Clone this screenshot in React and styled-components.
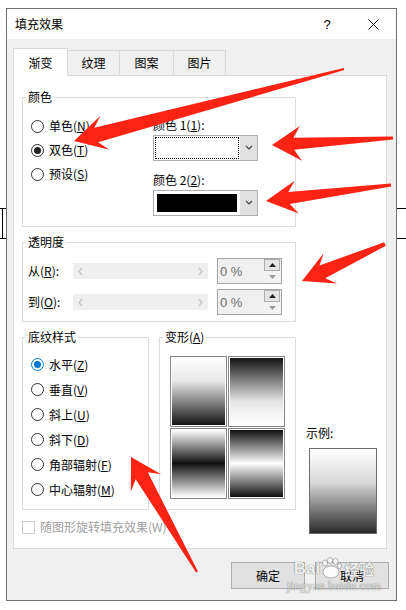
import React from 'react'
import styled, { createGlobalStyle } from 'styled-components'

const GlobalStyle = createGlobalStyle`
  html, body { margin: 0; padding: 0; background: #fff; }
  body {
    font-family: "Noto Sans CJK SC", "Microsoft YaHei", sans-serif;
    font-size: 12px;
    color: #000;
  }
  * { box-sizing: border-box; }
`

const Page = styled.div`
  position: relative;
  width: 406px;
  height: 610px;
  display: flex;
  overflow: hidden;
  background: #fff;
`

// bits of the document table peeking out on both sides
const Gutter = styled.div`
  flex: none;
  width: ${p => p.$w}px;
  padding-top: 208px;
`

const TableEdge = styled.div`
  height: 31px;
  border-top: 1px solid #000;
  border-bottom: 1px solid #000;
  display: flex;
  padding-left: 2px;
`

const TableStem = styled.div`
  width: 1px;
  background: #000;
`

const Dialog = styled.div`
  flex: none;
  width: 391px;
  height: 593px;
  margin-top: 8px;
  border: 1px solid #6f6f6f;
  background: #f0f0f0;
  display: flex;
  flex-direction: column;
`

const TitleBar = styled.div`
  height: 30px;
  background: #fff;
  display: flex;
  align-items: center;
  padding-left: 8px;
`

const TitleText = styled.div`
  flex: 1;
  line-height: 16px;
`

const CaptionButton = styled.div`
  width: 46px;
  height: 30px;
  display: flex;
  align-items: center;
  justify-content: center;
  font-family: "Liberation Sans", Arial, sans-serif;
  font-size: 13px;
`

const Body = styled.div`
  flex: 1;
  display: flex;
  flex-direction: column;
  padding: 9px 9px 11px 6px;
`

const TabRow = styled.div`
  display: flex;
  align-items: flex-end;
  height: 27px;
`

const Tab = styled.div`
  width: ${p => p.$w}px;
  height: ${p => (p.$active ? 28 : 25)}px;
  margin-bottom: ${p => (p.$active ? -1 : 0)}px;
  margin-left: ${p => (p.$first ? 0 : -1)}px;
  background: ${p => (p.$active ? '#fff' : '#f0f0f0')};
  border: 1px solid #d9d9d9;
  border-bottom: none;
  display: flex;
  align-items: center;
  justify-content: center;
  line-height: 14px;
  position: relative;
  z-index: ${p => (p.$active ? 2 : 1)};
`

const Panel = styled.div`
  height: 474px;
  background: #fff;
  border: 1px solid #d9d9d9;
  padding: 14px 0 14px 8px;
  display: flex;
  flex-direction: column;
`

const Group = styled.fieldset`
  margin: ${p => p.$mt || 0}px 0 0 0;
  padding: 0;
  min-width: 0;
  width: ${p => p.$w}px;
  border: 1px solid #dcdcdc;
`

const Legend = styled.legend`
  padding: 0 2px;
  margin-left: 3px;
  line-height: 14px;
  font-size: 12px;
`

const ColorGrid = styled.div`
  display: grid;
  grid-template-columns: 130px 1fr;
`

const RadioCol = styled.div`
  display: flex;
  flex-direction: column;
  padding: ${p => p.$pt}px 0 ${p => p.$pb || 0}px 8px;
`

const RadioRow = styled.div`
  display: flex;
  align-items: center;
  gap: 5px;
  height: ${p => p.$h}px;
  line-height: 14px;
  white-space: nowrap;
`

const RadioDot = styled.span`
  flex: none;
  width: 13px;
  height: 13px;
  border-radius: 50%;
  border: 1px solid ${p => (p.$blue ? '#0078d7' : '#333')};
  background: #fff;
  display: flex;
  align-items: center;
  justify-content: center;
  &::after {
    content: '';
    display: ${p => (p.$checked ? 'block' : 'none')};
    width: 7px;
    height: 7px;
    border-radius: 50%;
    background: ${p => (p.$blue ? '#0078d7' : '#222')};
  }
`

const Mn = styled.span`
  text-decoration: underline;
  text-underline-offset: 1px;
`

const ComboCol = styled.div`
  display: flex;
  flex-direction: column;
  padding: 11px 0 10px 0;
`

const FieldLabel = styled.div`
  line-height: 20px;
  height: 20px;
  margin-top: ${p => p.$mt || 0}px;
`

const Combo = styled.div`
  width: 105px;
  height: 26px;
  border: 1px solid #adadad;
  padding: 1px;
  display: flex;
  background: #fff;
`

const ComboField = styled.div`
  flex: 1;
  padding: 1px;
  border: 1px dotted ${p => (p.$focus ? '#000' : 'transparent')};
  display: flex;
`

const Swatch = styled.div`
  flex: 1;
  background: ${p => p.$color};
`

const ComboButton = styled.div`
  width: 17px;
  margin: -1px -1px -1px 1px;
  background: #e1e1e1;
  display: flex;
  align-items: center;
  justify-content: center;
`

const TransRows = styled.div`
  display: flex;
  flex-direction: column;
  gap: 5px;
  padding: 9px 0 6px 5px;
`

const TransRow = styled.div`
  display: flex;
  align-items: center;
  height: 26px;
`

const TransLabel = styled.div`
  width: 45px;
  line-height: 14px;
`

const Slider = styled.div`
  width: 135px;
  height: 16px;
  background: #efefef;
  display: flex;
  align-items: center;
  justify-content: space-between;
  padding: 0 5px;
`

const Spin = styled.div`
  width: 65px;
  height: 26px;
  margin-left: 9px;
  border: 1px solid #a5a5a5;
  background: #f0f0f0;
  display: flex;
  align-items: center;
  padding-left: 2px;
  font-family: "Liberation Sans", Arial, sans-serif;
  font-size: 13px;
  color: #6d6d6d;
`

const SpinText = styled.div`
  flex: 1;
`

const SpinButtons = styled.div`
  width: 16px;
  height: 24px;
  margin-right: 1px;
  display: flex;
  flex-direction: column;
`

const SpinButton = styled.div`
  flex: 1;
  display: flex;
  align-items: center;
  justify-content: center;
  background: ${p => (p.$on ? '#e5e5e5' : '#f3f3f3')};
  border: 1px solid ${p => (p.$on ? '#adadad' : 'transparent')};
`

const Lower = styled.div`
  display: flex;
  margin-top: 8px;
`

const LeftPart = styled.div`
  display: flex;
  flex-direction: column;
`

const GroupsRow = styled.div`
  display: flex;
  gap: 10px;
`

const VariantGrid = styled.div`
  display: grid;
  grid-template-columns: 57px 57px;
  grid-auto-rows: 71px;
  gap: 1px;
  padding: 12px 0 0 10px;
`

const Variant = styled.div`
  border: 1px solid #858585;
  padding: 1px;
  background: #fff;
  display: flex;
`

const Shade = styled.div`
  flex: 1;
  background: ${p => p.$bg};
`

const CheckRow = styled.div`
  display: flex;
  align-items: center;
  gap: 5px;
  height: 14px;
  margin-top: 10px;
  color: #a0a0a0;
  line-height: 14px;
`

const CheckBox = styled.span`
  width: 13px;
  height: 13px;
  border: 1px solid #cccccc;
  background: #fff;
`

const SampleCol = styled.div`
  display: flex;
  flex-direction: column;
  justify-content: flex-end;
  margin-left: 13px;
`

const SampleLabel = styled.div`
  line-height: 14px;
  margin: 0 0 8px -3px;
`

const SampleBox = styled.div`
  width: 68px;
  height: 86px;
  border: 1px solid #6d6d6d;
  background: linear-gradient(to bottom, #ffffff 0%, #d8d8d8 40%, #2a2a2a 100%);
`

const ButtonRow = styled.div`
  display: flex;
  justify-content: flex-end;
  gap: 10px;
  margin: 13px -2px 0 0;
`

const Button = styled.button`
  width: 74px;
  height: 27px;
  border: 1px solid #adadad;
  background: #e1e1e1;
  font: inherit;
  font-size: 12px;
  padding: 0;
  color: #000;
`

const Overlay = styled.svg`
  position: absolute;
  left: 0;
  top: 0;
  pointer-events: none;
`

const Watermark = styled.div`
  position: absolute;
  left: 288px;
  top: 555px;
  width: 92px;
  pointer-events: none;
  color: rgba(255, 255, 255, 0.92);
  text-shadow: 0 0 1px rgba(0, 0, 0, 0.45), 0 0 1px rgba(0, 0, 0, 0.3);
  display: flex;
  flex-direction: column;
  align-items: center;
`

const WmTop = styled.div`
  display: flex;
  align-items: flex-end;
  font-family: "Liberation Sans", Arial, sans-serif;
  font-weight: bold;
  font-size: 17px;
  line-height: 20px;
  height: 24px;
`

const WmCn = styled.span`
  font-family: "Noto Sans CJK SC", sans-serif;
  font-size: 15px;
  margin-left: 2px;
`

const WmUrl = styled.div`
  font-family: "Liberation Serif", serif;
  font-size: 12px;
  line-height: 14px;
  letter-spacing: 0.3px;
  color: rgba(255, 255, 255, 0.8);
`

const Chevron = ({ dir }) => {
  const pts = {
    down: '1,1 4,4 7,1',
    left: '4,1 1,4.5 4,8',
    right: '1,1 4,4.5 1,8',
  }[dir]
  const size = dir === 'down' ? [8, 6] : [5, 9]
  const color = dir === 'down' ? '#444' : '#c6c6c6'
  return (
    <svg width={size[0]} height={size[1]} viewBox={`0 0 ${size[0]} ${size[1]}`}>
      <polyline points={pts} fill="none" stroke={color} strokeWidth="1.2" />
    </svg>
  )
}

const Tri = ({ up, color }) => (
  <svg width="7" height="4" viewBox="0 0 7 4">
    <polygon points={up ? '0,4 3.5,0 7,4' : '0,0 3.5,4 7,0'} fill={color} />
  </svg>
)

const arrowPoints = ({ tail, tip, head, half, neck, tailW, notch }) => {
  const dx = tip[0] - tail[0]
  const dy = tip[1] - tail[1]
  const len = Math.hypot(dx, dy)
  const d = [dx / len, dy / len]
  const n = [-d[1], d[0]]
  const at = (p, k, m) => [p[0] - d[0] * k + n[0] * m, p[1] - d[1] * k + n[1] * m]
  const pts = [
    at(tail, 0, tailW),
    at(tip, head * notch, neck),
    at(tip, head, half),
    tip,
    at(tip, head, -half),
    at(tip, head * notch, -neck),
    at(tail, 0, -tailW),
  ]
  return pts.map(p => p.map(v => v.toFixed(1)).join(',')).join(' ')
}

const arrows = [
  { tail: [344, 69], tip: [74, 141], head: 32, half: 17.5, neck: 7.5, tailW: 1, notch: 0.72 },
  { tail: [393, 138], tip: [272, 145], head: 29, half: 17.5, neck: 6, tailW: 1.5, notch: 0.75 },
  { tail: [391, 185], tip: [266, 201], head: 31, half: 16.5, neck: 6, tailW: 1.5, notch: 0.75 },
  { tail: [385, 244], tip: [302, 281], head: 31, half: 16.5, neck: 7, tailW: 2, notch: 0.72 },
  { tail: [197, 572], tip: [131, 457], head: 30, half: 17.5, neck: 7, tailW: 1, notch: 0.72 },
]

const shades = [
  'linear-gradient(to bottom, #ffffff 0%, #e6e6e6 35%, #141414 100%)',
  'linear-gradient(to bottom, #141414 0%, #e6e6e6 65%, #ffffff 100%)',
  'linear-gradient(to bottom, #ffffff 0%, #101010 50%, #ffffff 100%)',
  'linear-gradient(to bottom, #101010 0%, #ffffff 50%, #101010 100%)',
]

const shadingStyles = [
  ['水平', 'Z', true],
  ['垂直', 'V'],
  ['斜上', 'U'],
  ['斜下', 'D'],
  ['角部辐射', 'F'],
  ['中心辐射', 'M'],
]

const Radio = ({ label, mn, checked, blue, h }) => (
  <RadioRow $h={h}>
    <RadioDot $checked={checked} $blue={blue} />
    <span>{label}(<Mn>{mn}</Mn>)</span>
  </RadioRow>
)

const TransparencyRow = ({ label, mn }) => (
  <TransRow>
    <TransLabel>{label}(<Mn>{mn}</Mn>):</TransLabel>
    <Slider>
      <Chevron dir="left" />
      <Chevron dir="right" />
    </Slider>
    <Spin>
      <SpinText>0 %</SpinText>
      <SpinButtons>
        <SpinButton $on><Tri up color="#222" /></SpinButton>
        <SpinButton><Tri color="#9a9a9a" /></SpinButton>
      </SpinButtons>
    </Spin>
  </TransRow>
)

const ColorCombo = ({ color, focus }) => (
  <Combo>
    <ComboField $focus={focus}>
      <Swatch $color={color} />
    </ComboField>
    <ComboButton><Chevron dir="down" /></ComboButton>
  </Combo>
)

export default function App() {
  return (
    <Page>
      <GlobalStyle />
      <Gutter $w={6}>
        <TableEdge><TableStem /></TableEdge>
      </Gutter>

      <Dialog>
        <TitleBar>
          <TitleText>填充效果</TitleText>
          <CaptionButton>?</CaptionButton>
          <CaptionButton>
            <svg width="11" height="11" viewBox="0 0 11 11">
              <path d="M0.5 0.5 L10.5 10.5 M10.5 0.5 L0.5 10.5" stroke="#111" strokeWidth="1" />
            </svg>
          </CaptionButton>
        </TitleBar>

        <Body>
          <TabRow>
            <Tab $w={55} $active $first>渐变</Tab>
            <Tab $w={53}>纹理</Tab>
            <Tab $w={55}>图案</Tab>
            <Tab $w={53}>图片</Tab>
          </TabRow>

          <Panel>
            <Group $w={274}>
              <Legend>颜色</Legend>
              <ColorGrid>
                <RadioCol $pt={10}>
                  <Radio label="单色" mn="N" h={24} />
                  <Radio label="双色" mn="T" h={24} checked />
                  <Radio label="预设" mn="S" h={24} />
                </RadioCol>
                <ComboCol>
                  <FieldLabel>颜色 1(<Mn>1</Mn>):</FieldLabel>
                  <ColorCombo color="#fff" focus />
                  <FieldLabel $mt={9}>颜色 2(<Mn>2</Mn>):</FieldLabel>
                  <ColorCombo color="#000" />
                </ComboCol>
              </ColorGrid>
            </Group>

            <Group $w={274} $mt={8}>
              <Legend>透明度</Legend>
              <TransRows>
                <TransparencyRow label="从" mn="R" />
                <TransparencyRow label="到" mn="O" />
              </TransRows>
            </Group>

            <Lower>
              <LeftPart>
                <GroupsRow>
                  <Group $w={127}>
                    <Legend>底纹样式</Legend>
                    <RadioCol $pt={8} $pb={7}>
                      {shadingStyles.map(([label, mn, on]) => (
                        <Radio key={mn} label={label} mn={mn} h={25} checked={on} blue={on} />
                      ))}
                    </RadioCol>
                  </Group>
                  <Group $w={137}>
                    <Legend>变形(<Mn>A</Mn>)</Legend>
                    <VariantGrid>
                      {shades.map((bg, i) => (
                        <Variant key={i}><Shade $bg={bg} /></Variant>
                      ))}
                    </VariantGrid>
                  </Group>
                </GroupsRow>
                <CheckRow>
                  <CheckBox />
                  <span>随图形旋转填充效果(W)</span>
                </CheckRow>
              </LeftPart>
              <SampleCol>
                <SampleLabel>示例:</SampleLabel>
                <SampleBox />
              </SampleCol>
            </Lower>
          </Panel>

          <ButtonRow>
            <Button>确定</Button>
            <Button>取消</Button>
          </ButtonRow>
        </Body>
      </Dialog>

      <Gutter $w={9}>
        <TableEdge />
      </Gutter>

      <Overlay width="406" height="610" viewBox="0 0 406 610">
        {arrows.map((a, i) => (
          <polygon key={i} points={arrowPoints(a)} fill="#fb2314" />
        ))}
      </Overlay>

      <Watermark>
        <WmTop>
          <span>Bai</span>
          <svg width="22" height="22" viewBox="0 0 22 22">
            <g fill="rgba(255,255,255,0.9)" stroke="rgba(0,0,0,0.35)" strokeWidth="0.8">
              <ellipse cx="5" cy="6" rx="2.5" ry="3" />
              <ellipse cx="10" cy="3.5" rx="2.5" ry="3" />
              <ellipse cx="15.5" cy="4.5" rx="2.5" ry="3" />
              <ellipse cx="19.5" cy="9" rx="2" ry="2.6" />
              <ellipse cx="11" cy="15" rx="8" ry="6" />
            </g>
          </svg>
          <WmCn>经验</WmCn>
        </WmTop>
        <WmUrl>jingyan.baidu.com</WmUrl>
      </Watermark>
    </Page>
  )
}
